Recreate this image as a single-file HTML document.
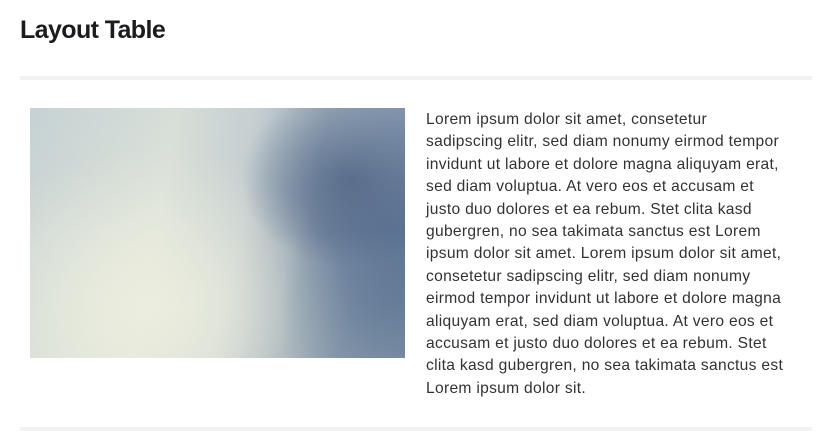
<!DOCTYPE html>
<html><head><style>
body{margin:0;width:832px;height:448px;background:#fff;font-family:"Liberation Sans",sans-serif;position:relative;overflow:hidden}
h1{position:absolute;left:20px;top:16px;margin:0;font-size:25px;font-weight:bold;color:#1b1c20;letter-spacing:-0.6px}
.hr{position:absolute;left:20px;width:792px;height:4px;background:#f0f1f3}
.img{position:absolute;left:30px;top:108px;width:375px;height:250px;overflow:hidden;
background:
radial-gradient(ellipse 110px 90px at 320px 70px,rgba(72,94,128,.9),rgba(72,94,128,0)),
radial-gradient(ellipse 110px 140px at 360px 200px,rgba(80,108,140,.8),rgba(80,108,140,0)),
radial-gradient(ellipse 200px 160px at 120px 200px,rgba(236,238,222,1),rgba(236,238,222,0)),
linear-gradient(100deg,#c9d3d4 0%,#dfe4da 35%,#c6ced0 55%,#8797ab 72%,#60769a 100%);}
.img:before{content:"";position:absolute;inset:0;background:linear-gradient(180deg,rgba(190,205,210,.25),rgba(0,0,0,0) 50%,rgba(232,236,220,.2))}
.t{position:absolute;left:426px;top:109px;font-size:15.6px;line-height:22.4px;color:#303236;white-space:nowrap;letter-spacing:0.3px}
</style></head><body>
<h1>Layout Table</h1>
<div class="hr" style="top:76px"></div>
<div class="img"></div>
<div class="t">Lorem ipsum dolor sit amet, consetetur<br>sadipscing elitr, sed diam nonumy eirmod tempor<br>invidunt ut labore et dolore magna aliquyam erat,<br>sed diam voluptua. At vero eos et accusam et<br>justo duo dolores et ea rebum. Stet clita kasd<br>gubergren, no sea takimata sanctus est Lorem<br>ipsum dolor sit amet. Lorem ipsum dolor sit amet,<br>consetetur sadipscing elitr, sed diam nonumy<br>eirmod tempor invidunt ut labore et dolore magna<br>aliquyam erat, sed diam voluptua. At vero eos et<br>accusam et justo duo dolores et ea rebum. Stet<br>clita kasd gubergren, no sea takimata sanctus est<br>Lorem ipsum dolor sit.</div>
<div class="hr" style="top:427px"></div>
</body></html>
